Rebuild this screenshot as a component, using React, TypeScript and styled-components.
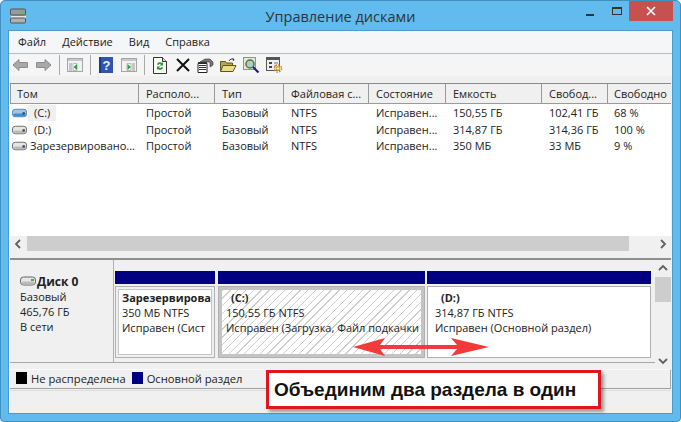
import React from "react";
import styled, { createGlobalStyle } from "styled-components";

const Global = createGlobalStyle`
  html, body { margin: 0; padding: 0; background: #fff; }
  * { box-sizing: border-box; }
  #root { width: 681px; height: 422px; overflow: hidden; }
`;

const Frame = styled.div`
  position: relative;
  width: 681px;
  height: 422px;
  background: #62bbee;
  border: 1px solid #3f8fbf;
  border-radius: 5px 5px 4px 4px;
  padding: 0 7px 7px 7px;
  display: flex;
  flex-direction: column;
  font-family: "Open Sans", "Noto Sans", sans-serif;
  font-size: 11px;
  color: #222;
`;

const TitleBar = styled.div`
  height: 29px;
  flex: none;
  position: relative;
  display: flex;
  align-items: center;
  justify-content: center;
  padding-top: 2px;
  font-size: 14.5px;
  color: #333;
`;

const AppIcon = styled.svg`
  position: absolute;
  left: 2px;
  top: 7px;
`;

const WinButtons = styled.div`
  position: absolute;
  right: 0;
  top: 0;
  display: flex;
  align-items: flex-start;
`;

const WinBtn = styled.div<{ $w: number }>`
  width: ${(p) => p.$w}px;
  height: 20px;
  display: flex;
  align-items: center;
  justify-content: center;
`;

const CloseBtn = styled(WinBtn)`
  background: #c75050;
  color: #fff;
`;

const Client = styled.div`
  flex: 1;
  min-height: 0;
  background: #f0f0f0;
  display: flex;
  flex-direction: column;
  border: 1px solid #4a9ccc;
`;

const MenuBar = styled.div`
  height: 23px;
  flex: none;
  background: #f5f6f7;
  border-bottom: 1px solid #b8bcc0;
  display: flex;
  align-items: center;
  padding: 0 0 1px 9px;
  gap: 16px;
  font-size: 11px;
`;

const ToolBar = styled.div`
  height: 22px;
  flex: none;
  background: #f5f5f5;
  display: flex;
  align-items: center;
`;

const Tool = styled.span`
  width: 23px;
  height: 22px;
  flex: none;
  display: flex;
  align-items: center;
  justify-content: center;
`;

const ToolSep = styled.span`
  width: 1px;
  height: 20px;
  flex: none;
  margin: 0 3.5px;
  background: #a8a8a8;
`;

const Content = styled.div`
  flex: 1;
  min-height: 0;
  display: flex;
  flex-direction: column;
  padding: 7px 1px 0 1px;
  background: #f0f0f0;
`;

const ListPanel = styled.div`
  height: 168px;
  flex: none;
  background: #fff;
  display: flex;
  flex-direction: column;
  border-top: 1px solid #8a8a8a;
`;

const cols = "129px 76px 69px 85px 77px 96px 66px 1fr";

const HeaderRow = styled.div`
  display: grid;
  grid-template-columns: ${cols};
  height: 20px;
  flex: none;
  background: #f0f0f0;
  border-bottom: 1px solid #9a9a9a;
  box-shadow: inset 1px 0 0 #9a9a9a;
`;

const HeaderCell = styled.div`
  padding: 0 0 0 7px;
  display: flex;
  align-items: center;
  border-right: 1px solid #9a9a9a;
  white-space: nowrap;
  overflow: hidden;
  font-size: 11px;
  &:last-child { border-right: 0; padding-left: 6px; }
`;

const Rows = styled.div`
  flex: 1;
  padding-top: 1px;
`;

const Row = styled.div`
  display: grid;
  grid-template-columns: ${cols};
  height: 16.5px;
  align-items: center;
`;

const Cell = styled.div`
  padding-left: 7px;
  white-space: nowrap;
  overflow: hidden;
  font-size: 11px;
  line-height: 16px;
  &:last-child { padding-left: 6px; }
`;

const VolCell = styled.div`
  display: flex;
  align-items: center;
  padding-left: 2px;
  height: 16px;
  white-space: nowrap;
  overflow: hidden;
  font-size: 11px;
`;

const VolName = styled.span<{ $pad: number; $sel?: boolean }>`
  margin-left: 1px;
  padding: 0 ${(p) => p.$pad}px;
  line-height: 16px;
  background: ${(p) => (p.$sel ? "#f0f0f0" : "transparent")};
`;

const HScroll = styled.div`
  height: 15px;
  flex: none;
  display: flex;
  align-items: center;
  background: #f0f0f0;
`;

const ScrollArrow = styled.div`
  width: 17px;
  flex: none;
  display: flex;
  justify-content: center;
`;

const HThumb = styled.div`
  width: 602px;
  height: 15px;
  flex: none;
  background: #cdcdcd;
`;

const HTrack = styled.div`
  flex: 1;
`;

const Splitter = styled.div`
  height: 9px;
  flex: none;
  background: #f0f0f0;
  border-bottom: 2px solid #8f8f8f;
`;

const DiskArea = styled.div`
  height: 109px;
  flex: none;
  display: flex;
  align-items: flex-start;
`;

const DiskMain = styled.div`
  flex: 1;
  min-width: 0;
  height: 103px;
  display: flex;
  border-bottom: 1px solid #a8a8a8;
`;

const DiskInfo = styled.div`
  width: 104px;
  flex: none;
  padding: 13px 0 0 10px;
  line-height: 15px;
  font-size: 11px;
  border-right: 1px solid #b0b0b0;
`;

const DiskTitle = styled.div`
  display: flex;
  align-items: center;
  gap: 1px;
  font-weight: 700;
  font-size: 12px;
  height: 16px;
`;

const Volumes = styled.div`
  flex: 1;
  display: flex;
  padding: 11px 0 4px 1px;
  min-width: 0;
`;

const Vol = styled.div<{ $w: number }>`
  width: ${(p) => p.$w}px;
  margin-right: 3px;
  flex: none;
  display: flex;
  flex-direction: column;
  &:nth-child(2) { margin-right: 2px; }
`;

const VolBar = styled.div`
  height: 13px;
  flex: none;
  background: #000080;
`;

const VolBody = styled.div<{ $pad: number; $bg: string }>`
  flex: 1;
  margin-top: 2px;
  border: 1px solid #b0b0b0;
  padding: ${(p) => p.$pad}px;
  background: ${(p) => p.$bg};
  display: flex;
  min-height: 0;
`;

const VolInner = styled.div<{ $hatch?: boolean; $framed?: boolean; $pl: number; $pt: number }>`
  flex: 1;
  min-width: 0;
  overflow: hidden;
  padding: ${(p) => p.$pt}px 0 0 ${(p) => p.$pl}px;
  line-height: 15px;
  white-space: nowrap;
  font-size: 11px;
  background-color: #fff;
  ${(p) => (p.$framed ? "border: 1px solid #c4c4c4;" : "")}
  ${(p) =>
    p.$hatch
      ? "background-image: repeating-linear-gradient(135deg, #cfcfcf 0, #cfcfcf 1px, #fff 1px, #fff 5.500px);"
      : ""}
`;

const VolHead = styled.div<{ $indent?: number }>`
  font-weight: 700;
  padding-left: ${(p) => p.$indent ?? 0}px;
`;

const VScroll = styled.div`
  width: 16px;
  height: 109px;
  flex: none;
  display: flex;
  flex-direction: column;
  background: #f0f0f0;
`;

const VArrow = styled.div`
  height: 17px;
  flex: none;
  display: flex;
  align-items: center;
  justify-content: center;
`;

const VTrack = styled.div`
  flex: 1;
`;

const VThumb = styled.div`
  height: 25px;
  flex: none;
  background: #cdcdcd;
`;

const Legend = styled.div`
  height: 20px;
  flex: none;
  display: flex;
  align-items: center;
  padding: 0 0 2px 6px;
  background: #f0f0f0;
  border-top: 1px solid #fafafa;
  border-right: 1px solid #a8a8a8;
  border-bottom: 1px solid #a0a0a0;
  font-size: 11.2px;
`;

const Swatch = styled.span<{ $c: string }>`
  width: 11px;
  height: 12px;
  background: ${(p) => p.$c};
  margin-right: 4px;
`;

const LegendItem = styled.span`
  display: flex;
  align-items: center;
  margin-right: 6px;
`;

const StatusBar = styled.div`
  flex: 1;
  margin-top: 1px;
  border-top: 1px solid #dcdcdc;
  background: #f0f0f0;
`;

const Callout = styled.div`
  position: absolute;
  left: 265px;
  top: 369px;
  width: 335px;
  height: 39px;
  background: #fff;
  border: 3px solid #e2141c;
  box-shadow: 3px 3px 3px rgba(0, 0, 0, 0.35);
  font-family: "Liberation Sans", Arial, sans-serif;
  font-weight: 700;
  font-size: 19px;
  color: #111;
  display: flex;
  align-items: center;
  padding-left: 5px;
  white-space: nowrap;
`;

const Arrow = styled.svg`
  position: absolute;
  left: 350px;
  top: 336px;
`;

const ArrowLeftIc = () => (
  <svg width="17" height="14" viewBox="0 0 17 14">
    <path d="M1 7 7 1.500V4.500H15.500V9.500H7V12.500Z" fill="#a9a9a9" stroke="#8c8c8c" />
  </svg>
);
const ArrowRightIc = () => (
  <svg width="17" height="14" viewBox="0 0 17 14">
    <path d="M16 7 10 1.500V4.500H1.500V9.500H10V12.500Z" fill="#a9a9a9" stroke="#8c8c8c" />
  </svg>
);
const PaneIc = ({ right }: { right?: boolean }) => (
  <svg width="16" height="14" viewBox="0 0 16 14">
    <rect x="0.500" y="0.500" width="15" height="13" fill="#f2f2f2" stroke="#a5a5a5" />
    <rect x="1" y="1" width="14" height="2" fill="#c8c8c8" />
    <path d="M6 5.500h4v7H6z" fill="#fff" stroke="#bbb" />
    <path d={right ? "M6.500 6v6l3.500-3z" : "M10 6v6L6.500 9z"} fill="#27a344" />
    <path d={right ? "M11 6h3M11 8h3M11 10h3M11 12h3" : "M2 6h3M2 8h3M2 10h3M2 12h3"} stroke="#9a9a9a" />
  </svg>
);
const HelpIc = () => (
  <svg width="14" height="16" viewBox="0 0 14 16">
    <rect width="14" height="16" fill="#2f55b0" />
    <rect x="0" y="0" width="2" height="16" fill="#1b3a8a" />
    <text x="7.500" y="12.500" fontFamily="Liberation Sans" fontSize="13" fontWeight="700" fill="#e8eefc" textAnchor="middle">?</text>
  </svg>
);
const RefreshIc = () => (
  <svg width="14" height="17" viewBox="0 0 14 17">
    <path d="M.5.500H9.500L13.500 4.500V16.500H.5Z" fill="#fbfbf2" stroke="#333" />
    <path d="M9.500.500V4.500H13.500" fill="#ddd" stroke="#333" />
    <path d="M4 7.500A3 3 0 0 1 9 6l1-1v3.500H6.700L8 7.300A2 2 0 0 0 5.300 8Z" fill="#1e9b3a" />
    <path d="M10 10.500A3 3 0 0 1 5 12l-1 1V9.500h3.300L6 10.700A2 2 0 0 0 8.700 10Z" fill="#1e9b3a" />
  </svg>
);
const CrossIc = () => (
  <svg width="14" height="14" viewBox="0 0 14 14">
    <path d="M1 1 13 13M13 1 1 13" stroke="#111" strokeWidth="2" />
  </svg>
);
const PropsIc = () => (
  <svg width="17" height="15" viewBox="0 0 17 15">
    <path d="M1 5.500H10V14.500H1Z" fill="#fff" stroke="#222" />
    <path d="M2 7.500h7M2 9.500h7M2 11.500h7" stroke="#333" />
    <path d="M3 4 8 1h5l3 3v3l-3 2V4Z" fill="#777" stroke="#333" strokeWidth=".6" />
    <path d="M1 4h9v1.500H1z" fill="#333" />
  </svg>
);
const FolderIc = () => (
  <svg width="17" height="14" viewBox="0 0 17 14">
    <path d="M.5 3.500h5l1 1.500h6v8H.5Z" fill="#b9a94a" stroke="#5e5518" />
    <path d="M.5 13.500 3 7.500h13l-3 6Z" fill="#e9de8a" stroke="#5e5518" />
    <path d="M9 3C10 1 12 .5 14 1.500M14 1.500 12.500 .5M14 1.500 13 3" stroke="#333" fill="none" />
  </svg>
);
const ZoomIc = () => (
  <svg width="17" height="16" viewBox="0 0 17 16">
    <rect x=".5" y=".5" width="12" height="12" fill="#dfe9d5" stroke="#8a9a80" />
    <circle cx="7" cy="7" r="4" fill="#9fd6c8" stroke="#6b6b3a" strokeWidth="1.500" />
    <path d="M10 10 15.500 15.500" stroke="#16228a" strokeWidth="2.200" />
  </svg>
);
const SettingsIc = () => (
  <svg width="17" height="16" viewBox="0 0 17 16">
    <rect x=".5" y=".5" width="13" height="13" fill="#f0f0f0" stroke="#555" />
    <rect x="1" y="1" width="12" height="2" fill="#555" />
    <path d="M3 5h3v2H3zM3 9h3v2H3z" fill="#444" />
    <path d="M8 6h4M8 9h2" stroke="#777" />
    <circle cx="12" cy="11.500" r="3.600" fill="none" stroke="#b8861c" strokeWidth="1.400" strokeDasharray="1.500 1.300" />
    <circle cx="12" cy="11.500" r="2.400" fill="#e0a92f" />
    <circle cx="12" cy="11.500" r=".9" fill="#fff" />
  </svg>
);
const DiskIc = ({ blue, big }: { blue?: boolean; big?: boolean }) => (
  <svg width={big ? 16 : 15} height="10" viewBox="0 0 16 10">
    <rect x=".5" y="1" width="15" height="8" rx="3" fill={blue ? "#9cc7ea" : "#e6e6e6"} stroke={blue ? "#5a7f9e" : "#666"} />
    <rect x="1.500" y="5.500" width="13" height="3" rx="1.500" fill={blue ? "#3f8fd6" : "#bbb"} />
    {big && <rect x="11" y="3" width="3" height="2" fill="#5aa84a" />}
    {!big && <circle cx="12.500" cy="5.500" r="1.500" fill={blue ? "#2a5a86" : "#555"} />}
  </svg>
);
const Chevron = ({ d }: { d: "l" | "r" | "u" | "d" }) => {
  const p = { l: "M6 1 2 5l4 4", r: "M3 1l4 4-4 4", u: "M1 6l4-4 4 4", d: "M1 3l4 4 4-4" }[d];
  return (
    <svg width="10" height="10" viewBox="0 0 10 10">
      <path d={p} fill="none" stroke="#606060" strokeWidth="1.800" />
    </svg>
  );
};

const headers = ["Том", "Располо...", "Тип", "Файловая с...", "Состояние", "Емкость", "Свобод...", "Свободно"];
const rows = [
  { name: "(C:)", pad: 6, blue: true, sel: true, vals: ["Простой", "Базовый", "NTFS", "Исправен...", "150,55 ГБ", "102,41 ГБ", "68 %"] },
  { name: "(D:)", pad: 6, blue: false, sel: false, vals: ["Простой", "Базовый", "NTFS", "Исправен...", "314,87 ГБ", "314,36 ГБ", "100 %"] },
  { name: "Зарезервировано...", pad: 2, blue: false, sel: false, vals: ["Простой", "Базовый", "NTFS", "Исправен...", "350 МБ", "33 МБ", "9 %"] },
];

export default function App() {
  return (
    <Frame>
      <Global />
      <TitleBar>
        <AppIcon width="17" height="16" viewBox="0 0 17 16">
          <rect x=".5" y="1" width="15" height="6" rx="1" fill="#9a9a9a" stroke="#555" />
          <rect x="10" y="3" width="4" height="2" fill="#5fbf5f" />
          <rect x="1" y="8" width="15" height="2" fill="#e8e8e8" />
          <rect x=".5" y="10" width="15" height="5" rx="1" fill="#b0b0b0" stroke="#555" />
        </AppIcon>
        Управление дисками
        <WinButtons>
          <WinBtn $w={30}>
            <svg width="11" height="11" viewBox="0 0 11 11"><rect x="1" y="8" width="8" height="2" fill="#333" /></svg>
          </WinBtn>
          <WinBtn $w={24}>
            <svg width="12" height="11" viewBox="0 0 12 11"><rect x="1.500" y="1.500" width="9" height="7" fill="none" stroke="#333" /><rect x="1" y="1" width="10" height="2" fill="#333" /></svg>
          </WinBtn>
          <CloseBtn $w={44}>
            <svg width="10" height="10" viewBox="0 0 10 10"><path d="M1 1 9 9M9 1 1 9" stroke="#fff" strokeWidth="1.600" /></svg>
          </CloseBtn>
        </WinButtons>
      </TitleBar>
      <Client>
        <MenuBar>
          <span>Файл</span>
          <span>Действие</span>
          <span>Вид</span>
          <span>Справка</span>
        </MenuBar>
        <ToolBar>
          <Tool><ArrowLeftIc /></Tool>
          <Tool><ArrowRightIc /></Tool>
          <ToolSep />
          <Tool><PaneIc /></Tool>
          <ToolSep />
          <Tool><HelpIc /></Tool>
          <Tool><PaneIc right /></Tool>
          <ToolSep />
          <Tool><RefreshIc /></Tool>
          <Tool><CrossIc /></Tool>
          <Tool><PropsIc /></Tool>
          <Tool><FolderIc /></Tool>
          <Tool><ZoomIc /></Tool>
          <Tool><SettingsIc /></Tool>
        </ToolBar>
        <Content>
          <ListPanel>
            <HeaderRow>
              {headers.map((h) => (
                <HeaderCell key={h}>{h}</HeaderCell>
              ))}
            </HeaderRow>
            <Rows>
              {rows.map((r) => (
                <Row key={r.name}>
                  <VolCell>
                    <DiskIc blue={r.blue} />
                    <VolName $pad={r.pad} $sel={r.sel}>{r.name}</VolName>
                  </VolCell>
                  {r.vals.map((v, i) => (
                    <Cell key={i}>{v}</Cell>
                  ))}
                </Row>
              ))}
            </Rows>
            <HScroll>
              <ScrollArrow><Chevron d="l" /></ScrollArrow>
              <HThumb />
              <HTrack />
              <ScrollArrow><Chevron d="r" /></ScrollArrow>
            </HScroll>
          </ListPanel>
          <Splitter />
          <DiskArea>
            <DiskMain>
              <DiskInfo>
                <DiskTitle><DiskIc big />Диск 0</DiskTitle>
                <div>Базовый</div>
                <div>465,76 ГБ</div>
                <div>В сети</div>
              </DiskInfo>
              <Volumes>
                <Vol $w={100}>
                  <VolBar />
                  <VolBody $pad={2} $bg="#f0f0f0">
                    <VolInner $framed $pl={3} $pt={0}>
                      <VolHead>Зарезервирова</VolHead>
                      <div>350 МБ NTFS</div>
                      <div>Исправен (Сист</div>
                    </VolInner>
                  </VolBody>
                </Vol>
                <Vol $w={207}>
                  <VolBar />
                  <VolBody $pad={3} $bg="#c4c4c4">
                    <VolInner $hatch $pl={4} $pt={0}>
                      <VolHead $indent={5}>(C:)</VolHead>
                      <div>150,55 ГБ NTFS</div>
                      <div>Исправен (Загрузка, Файл подкачки</div>
                    </VolInner>
                  </VolBody>
                </Vol>
                <Vol $w={224}>
                  <VolBar />
                  <VolBody $pad={0} $bg="#fff">
                    <VolInner $pl={7} $pt={3}>
                      <VolHead $indent={6}>(D:)</VolHead>
                      <div>314,87 ГБ NTFS</div>
                      <div>Исправен (Основной раздел)</div>
                    </VolInner>
                  </VolBody>
                </Vol>
              </Volumes>
            </DiskMain>
            <VScroll>
              <VArrow><Chevron d="u" /></VArrow>
              <VThumb />
              <VTrack />
              <VArrow><Chevron d="d" /></VArrow>
            </VScroll>
          </DiskArea>
          <Legend>
            <LegendItem><Swatch $c="#000" />Не распределена</LegendItem>
            <LegendItem><Swatch $c="#000080" />Основной раздел</LegendItem>
          </Legend>
          <StatusBar />
        </Content>
      </Client>
      <Arrow width="140" height="22" viewBox="0 0 140 22">
        <path d="M2 10 34 1 29 8H106L100 1 138 10 100 19 106 12H29L34 19Z" fill="#f33a3a" />
      </Arrow>
      <Callout>Объединим два раздела в один</Callout>
    </Frame>
  );
}
